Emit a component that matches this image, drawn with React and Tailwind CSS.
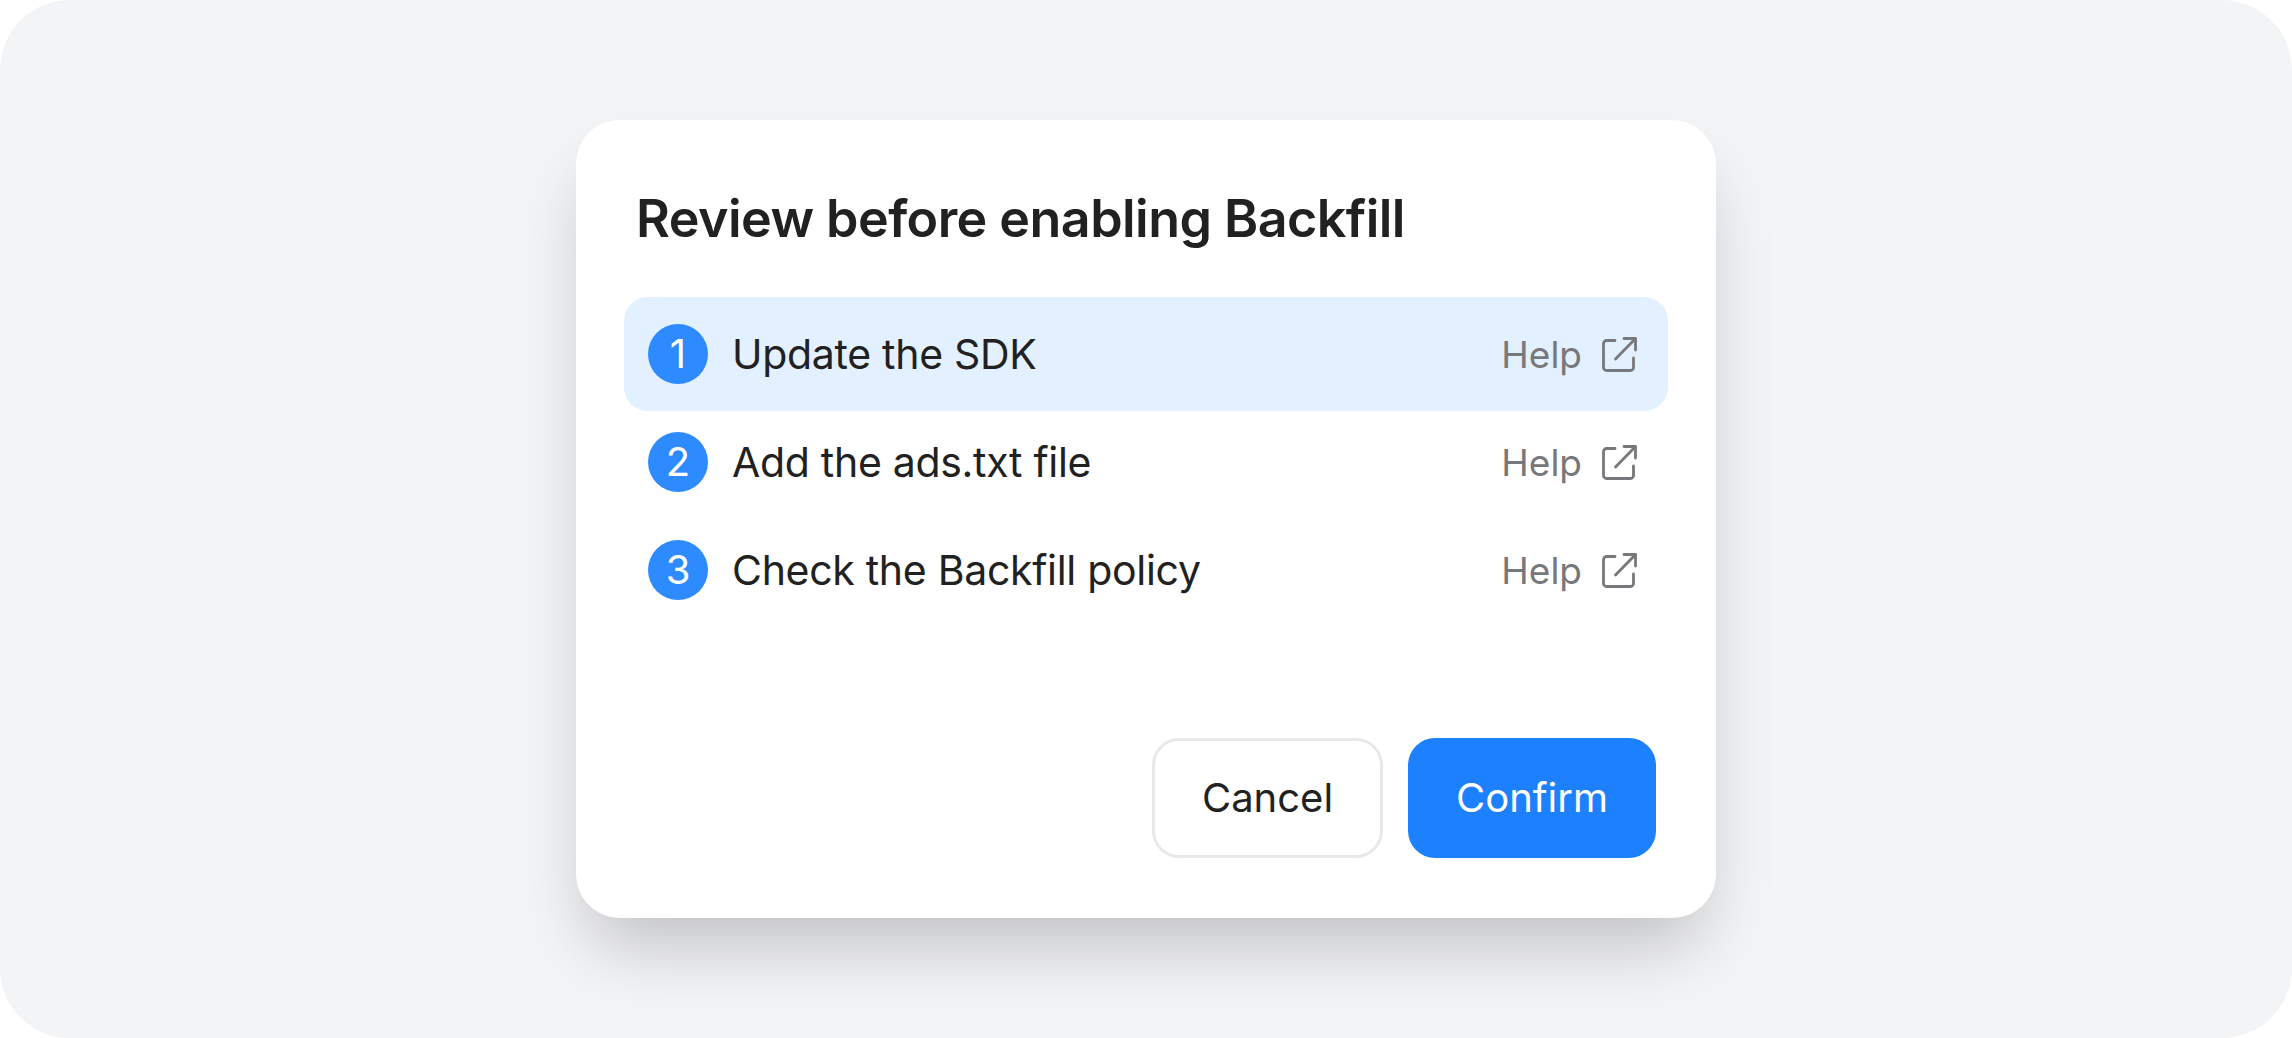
const steps = ["Update the SDK", "Add the ads.txt file", "Check the Backfill policy"];

function HelpIcon() {
  return (
    <svg width="35" height="35" viewBox="0 0 35 35" fill="none" stroke="currentColor" strokeWidth="2.8" strokeLinecap="round" strokeLinejoin="round">
      <path d="M13 3.500H4.500a3 3 0 0 0-3 3v24a3 3 0 0 0 3 3h24a3 3 0 0 0 3-3V21" />
      <path d="M13.500 22 33 2" />
      <path d="M22 1.500h11.500V13" />
    </svg>
  );
}

function StepRow({ index, label, active }) {
  return (
    <div className={`flex h-[114px] items-center rounded-3xl pl-6 pr-[31px] ${index > 0 ? "-mt-[6px]" : ""} ${active ? "bg-[#e3f0ff]" : ""}`}>
      <div className="flex h-[60px] w-[60px] shrink-0 items-center justify-center rounded-full bg-[#2e8bff] text-[40px] leading-none text-white">
        {index + 1}
      </div>
      <span className="ml-6 text-[41px] leading-none tracking-[-0.3px] text-[#212121]">{label}</span>
      <span className="ml-auto text-[37px] leading-none text-[#77787b]">Help</span>
      <span className="ml-5 text-[#77787b]">
        <HelpIcon />
      </span>
    </div>
  );
}

export default function App() {
  return (
    <div className="h-[1038px] w-[2292px] bg-white font-['Inter',sans-serif]">
      <div className="flex h-full w-full items-center justify-center rounded-[70px] bg-[#f3f4f6]">
        <div className="flex h-[798px] w-[1140px] flex-col rounded-[44px] bg-white px-12 pt-[69px] pb-[60px] shadow-[0_40px_70px_-15px_rgba(0,0,0,0.22)]">
          <h1 className="ml-3 text-[52px] leading-[60px] font-semibold tracking-[-0.55px] text-[#212121]">Review before enabling Backfill</h1>
          <div className="mt-[48px] flex flex-col">
            {steps.map((label, i) => (
              <StepRow key={label} index={i} label={label} active={i === 0} />
            ))}
          </div>
          <div className="mt-auto flex justify-end gap-[25px] pr-3">
            <button className="h-[120px] w-[231px] rounded-[27px] border-[3px] border-[#e8e8e8] bg-white text-[40px] text-[#212121]">Cancel</button>
            <button className="h-[120px] w-[248px] rounded-[27px] bg-[#1d80ff] text-[40px] text-white">Confirm</button>
          </div>
        </div>
      </div>
    </div>
  );
}
